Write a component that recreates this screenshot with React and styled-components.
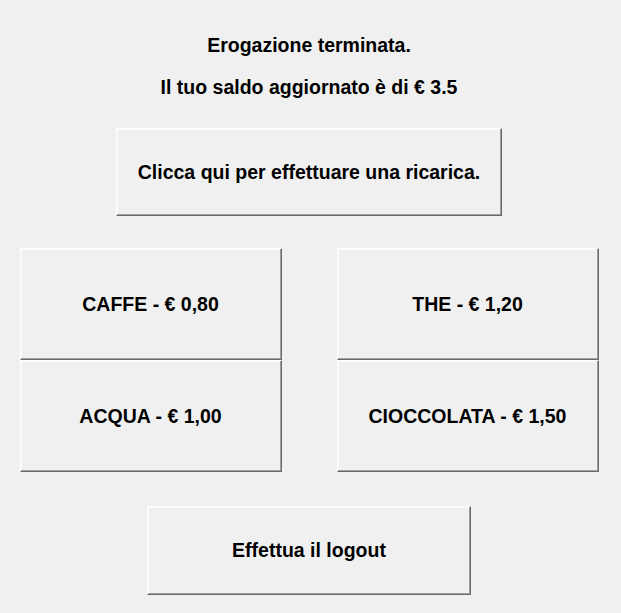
import React from "react";
import styled, { createGlobalStyle } from "styled-components";

const Global = createGlobalStyle`
  html, body { margin: 0; padding: 0; background: #f0f0f0; }
  body { font-family: "Liberation Sans", Arial, sans-serif; }
`;

const Page = styled.div`
  width: 618px;
  height: 613px;
  display: flex;
  flex-direction: column;
  align-items: center;
  padding-top: 33px;
  box-sizing: border-box;
`;

const Label = styled.div`
  font-size: 19.5px;
  font-weight: bold;
  line-height: 24px;
  height: 24px;
  color: #000;
  margin-bottom: ${(p) => p.$mb || 0}px;
`;

const Button = styled.button`
  box-sizing: border-box;
  width: ${(p) => p.$w}px;
  height: ${(p) => p.$h}px;
  background: #f0f0f0;
  border-style: solid;
  border-width: 1px 1px 1px 1px;
  border-color: #ffffff #696969 #696969 #ffffff;
  box-shadow: inset -1px -1px 0 #a0a0a0, inset 1px 1px 0 #f8f8f8;
  font-family: "Liberation Sans", Arial, sans-serif;
  font-size: 19.5px;
  font-weight: bold;
  color: #000;
  padding: 0;
  margin: 0;
  cursor: pointer;
  display: flex;
  align-items: center;
  justify-content: center;
`;

const Grid = styled.div`
  display: grid;
  grid-template-columns: 262px 262px;
  grid-template-rows: 112px 112px;
  column-gap: 55px;
  margin-top: 32px;
  margin-bottom: 34px;
`;

const GridButton = styled(Button)`
  width: 100%;
  height: 100%;
`;

const products = ["CAFFE - € 0,80", "THE - € 1,20", "ACQUA - € 1,00", "CIOCCOLATA - € 1,50"];

export default function App() {
  return (
    <>
      <Global />
      <Page>
        <Label $mb={18}>Erogazione terminata.</Label>
        <Label $mb={29}>Il tuo saldo aggiornato è di € 3.5</Label>
        <Button $w={386} $h={88}>Clicca qui per effettuare una ricarica.</Button>
        <Grid>
          {products.map((p) => (
            <GridButton key={p}>{p}</GridButton>
          ))}
        </Grid>
        <Button $w={324} $h={89}>Effettua il logout</Button>
      </Page>
    </>
  );
}
